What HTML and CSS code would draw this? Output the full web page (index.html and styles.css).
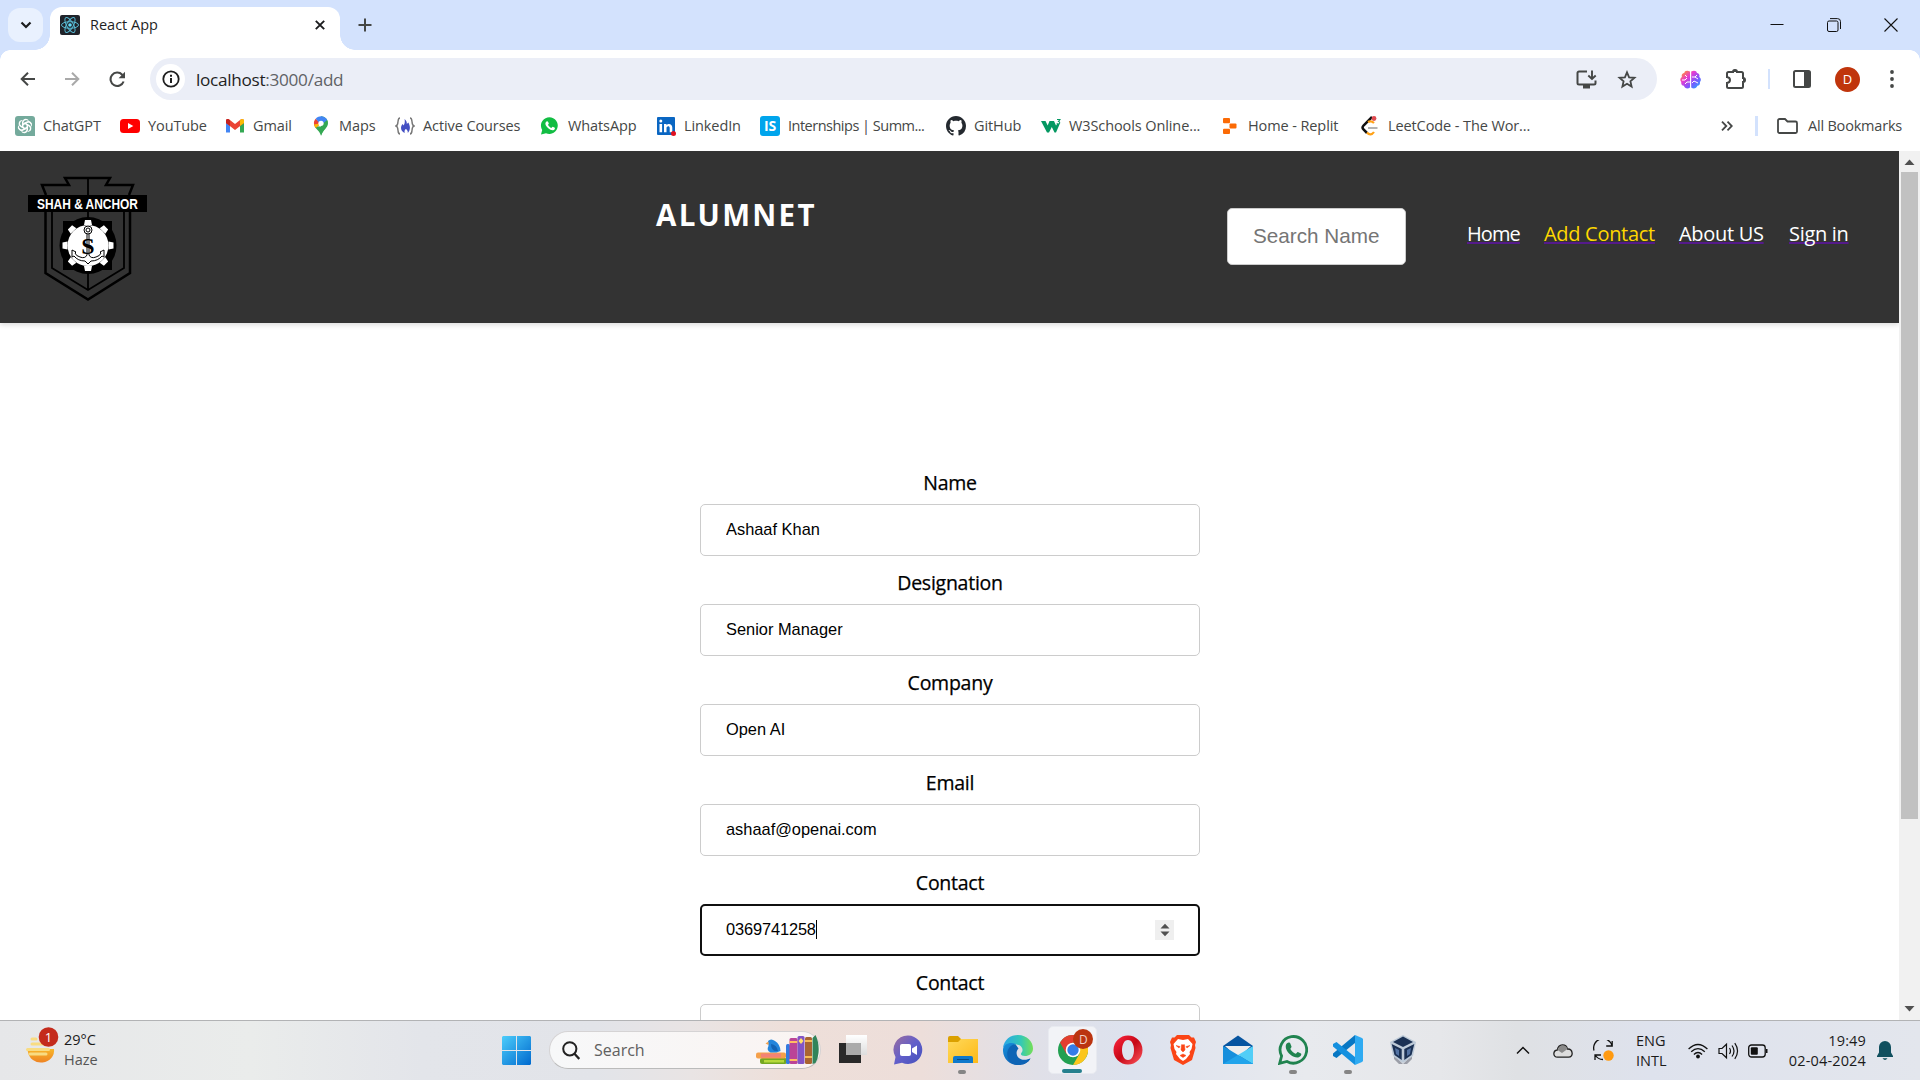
FILE: index.html
```html
<!DOCTYPE html>
<html lang="en">
<head>
<meta charset="utf-8">
<title>React App</title>
<link rel="stylesheet" href="styles.css">
</head>
<body>
<div class="screen">
  <header class="tabstrip">
    <button class="tab-search"><svg width="12" height="8" viewBox="0 0 12 8"><path d="M1.5 1.5 6 6l4.500-4.500" fill="none" stroke="#1b1c1e" stroke-width="2.200"/></svg></button>
    <div class="tab">
      <svg width="20" height="20" viewBox="0 0 20 20"><rect width="20" height="20" rx="2" fill="#20232a"/><g fill="none" stroke="#58b9d3" stroke-width="1"><ellipse cx="10" cy="10" rx="8.500" ry="3.300"/><ellipse cx="10" cy="10" rx="8.500" ry="3.300" transform="rotate(60 10 10)"/><ellipse cx="10" cy="10" rx="8.500" ry="3.300" transform="rotate(120 10 10)"/></g><circle cx="10" cy="10" r="1.800" fill="#61dafb"/></svg>
      <span class="tab-title">React App</span>
      <svg class="tab-close" width="10" height="10" viewBox="0 0 10 10"><path d="m.8.800 8.400 8.400M9.200.800.800 9.200" stroke="#1b1c1e" stroke-width="1.900"/></svg>
    </div>
    <svg class="new-tab" width="14" height="14" viewBox="0 0 14 14"><path d="M7 .5v13M.5 7h13" stroke="#454746" stroke-width="2"/></svg>
    <div class="window-buttons">
      <svg width="14" height="14" viewBox="0 0 14 14"><path d="M.5 6.500h13" stroke="#111"/></svg>
      <svg width="14" height="14" viewBox="0 0 14 14"><g fill="none" stroke="#111"><rect x=".5" y="3" width="10.500" height="10.500" rx="1.500"/><path d="M3 .6h7.500a3 3 0 0 1 3 3V11"/></g></svg>
      <svg width="14" height="14" viewBox="0 0 14 14"><path d="m.5.500 13 13m0-13-13 13" stroke="#111" stroke-width="1.100"/></svg>
    </div>
  </header>

  <div class="toolbar">
    <svg width="15" height="14" viewBox="0 0 15 14"><path d="M15 7H1.500M8 .8 1.700 7 8 13.200" fill="none" stroke="#454746" stroke-width="2"/></svg>
    <svg width="15" height="14" viewBox="0 0 15 14"><path d="M0 7h13.500M7 .8 13.300 7 7 13.200" fill="none" stroke="#a9a9a9" stroke-width="2"/></svg>
    <svg width="17" height="17" viewBox="0 0 17 17"><path d="M14.600 10.500A6.700 6.700 0 1 1 13.200 3.700L15 5.500" fill="none" stroke="#454746" stroke-width="2.100"/><path d="M16 .8v6.400H9.600z" fill="#454746"/></svg>
    <div class="address">
      <span class="site-info"><svg width="18" height="18" viewBox="0 0 18 18"><circle cx="9" cy="9" r="7.700" fill="none" stroke="#1f1f1f" stroke-width="1.800"/><path d="M9 8v5M9 4.700v2" stroke="#1f1f1f" stroke-width="2"/></svg></span>
      <span class="url">localhost<span>:3000/add</span></span>
      <svg class="install" width="21" height="19" viewBox="0 0 21 19"><path d="M11 1.500H3A1.500 1.500 0 0 0 1.500 3v10A1.500 1.500 0 0 0 3 14.500h15a1.500 1.500 0 0 0 1.500-1.500v-2.500" fill="none" stroke="#454746" stroke-width="2"/><path d="M7 15h7v3.500H7z" fill="#454746"/><path d="M16 .5v8M12.300 5.500 16 9l3.700-3.500" fill="none" stroke="#454746" stroke-width="1.900"/></svg>
      <svg width="20" height="19" viewBox="0 0 20 19"><path d="m10 2.300 2.100 5 5.400.500-4.100 3.500 1.200 5.300L10 13.800l-4.600 2.800 1.200-5.300-4.100-3.500 5.400-.500z" fill="none" stroke="#454746" stroke-width="1.800"/></svg>
    </div>
    <svg class="brain" width="21" height="19" viewBox="0 0 21 19"><defs><linearGradient id="brain" x1="0" y1="0" x2="1" y2="1"><stop offset=".1" stop-color="#ff8a3d"/><stop offset=".35" stop-color="#e83bd0"/><stop offset=".65" stop-color="#7d55ff"/><stop offset="1" stop-color="#18b8ff"/></linearGradient></defs><path d="M10 1.500C7 0 4.500.8 4.300 3 2 3.200 1.200 5.500 2 7 0 8-.2 10.500 1.300 12c-.5 2 .7 3.600 2.500 3.800.8 2.600 4 3.500 6.200 1.700zM11.200 1.500C14 0 16.700.8 16.900 3c2.300.2 3.100 2.500 2.300 4 2 1 2.200 3.500.7 5 .5 2-.7 3.600-2.500 3.800-.8 2.600-4 3.500-6.200 1.700z" fill="url(#brain)"/><path d="M2 10h3l2-2M5 5l2 2M5 14l2-2h3M12 7h3l2-2M12 13l2-2 4 2M15 7l3 2" stroke="#fff" fill="none" stroke-width="1"/></svg>
    <svg class="puzzle" width="22" height="22" viewBox="0 0 22 22"><path d="M3.500 4H8a2 2 0 0 1 4 0h4.500A1.500 1.500 0 0 1 18 5.500V10a2 2 0 0 1 0 4v4.500a1.500 1.500 0 0 1-1.500 1.500h-13A1.500 1.500 0 0 1 2 18.500V15c4-.5 4-5.500 0-6V5.500A1.500 1.500 0 0 1 3.500 4z" fill="none" stroke="#454746" stroke-width="2"/><path d="M7.500 4a2.400 2.400 0 0 1 4.800 0zM18 9.500a2.400 2.400 0 0 1 0 4.800z" fill="#454746"/></svg>
    <i class="divider"></i>
    <svg class="panel" width="18" height="18" viewBox="0 0 18 18"><rect x="1" y="1" width="16" height="16" rx="1.500" fill="none" stroke="#454746" stroke-width="2"/><path d="M11 1h6v16h-6z" fill="#454746"/></svg>
    <span class="avatar">D</span>
    <svg class="menu" width="4" height="18" viewBox="0 0 4 18"><g fill="#454746"><circle cx="2" cy="2" r="1.900"/><circle cx="2" cy="9" r="1.900"/><circle cx="2" cy="16" r="1.900"/></g></svg>
  </div>

  <nav class="bookmarks">
    <a><svg width="20" height="20" viewBox="0 0 20 20"><path d="M3 0h14a3 3 0 0 1 3 3v17H3a3 3 0 0 1-3-3V3a3 3 0 0 1 3-3z" fill="#74aa9c"/><g fill="none" stroke="#fff" stroke-width="1.100"><path id="petal" d="M7.500 12V6.400a3.200 3.200 0 0 1 5.900-1.600M7.500 9 12 6.400a3 3 0 0 1 4.300 2"/><use href="#petal" transform="rotate(60 10 10)"/><use href="#petal" transform="rotate(120 10 10)"/><use href="#petal" transform="rotate(180 10 10)"/><use href="#petal" transform="rotate(240 10 10)"/><use href="#petal" transform="rotate(300 10 10)"/></g></svg><span>ChatGPT</span></a>
    <a><svg width="20" height="20" viewBox="0 0 20 20"><rect y="3" width="20" height="14" rx="3.500" fill="#f00"/><path d="m8 7 5.300 3L8 13z" fill="#fff"/></svg><span>YouTube</span></a>
    <a><svg width="20" height="20" viewBox="0 0 20 20"><path d="M1 5v11.500h4V9z" fill="#4285f4"/><path d="M15 9v7.500h4V5z" fill="#34a853"/><path d="M1 7V4.500C1 3 3 2.500 4.300 3.500L10 8l5.700-4.500C17 2.500 19 3 19 4.500V7l-9 7z" fill="#ea4335"/><path d="m15 4.200.7-.7C17 2.500 19 3 19 4.500V7l-4 3z" fill="#fbbc04"/><path d="M1 4.500C1 3 3 2.700 4 3.400L5 4.200V10L1 7z" fill="#c5221f"/></svg><span>Gmail</span></a>
    <a><svg width="20" height="20" viewBox="0 0 20 20"><path d="M10 .3a7 7 0 0 1 7 7c0 4.500-5 6.500-7 12.500z" fill="#34a853"/><path d="M3.500 10.300C5 13.500 8.500 14.500 10 19.800c1-4.500 4-7 5.500-9z" fill="#34a853"/><path d="M3.300 5.300C2.500 7.500 3 9.500 4.800 11.700L10 7.300z" fill="#fbbc04"/><path d="M4.700 2.800 10 7.300l-5.200 4.400C2.500 9 2.200 5.500 4.700 2.800z" fill="#ea4335"/><path d="M3.100 8.500c.3 1.200.9 2.200 1.700 3.200L10 7.300z" fill="#fbbc04"/><path d="M4.700 2.800A7 7 0 0 1 16.200 4L10 9z" fill="#4285f4"/><circle cx="10" cy="7.300" r="2.600" fill="#fff"/></svg><span>Maps</span></a>
    <a><svg width="20" height="20" viewBox="0 0 20 20"><path d="M5 2C1.500 2 4.500 9 1 10c3.500 1 .5 8 4 8M15 2c3.500 0 .5 7 4 8-3.500 1-.5 8-4 8" fill="none" stroke="#777" stroke-width="1.400"/><path d="M9.500 3c2 1.500 2.500 3.500 2.300 5l1.500-1.500c2 3.500 2.500 7-.5 10.500.2-2-.8-3.500-2-4-1.300 1-1.500 2.500-1 4-4-1.500-5-6.500-2-9l.8 1.500C10 7.500 10 5 9.500 3z" fill="#434fc3"/></svg><span>Active Courses</span></a>
    <a><svg width="20" height="20" viewBox="0 0 20 20"><path d="M1 18.500 2.200 14A8.400 8.400 0 1 1 6 17.300z" fill="#12bd43"/><path d="M6.500 5.500c1-.8 1.500-.3 2.300 1.800.1.700-.9 1.200-.7 1.600.8 1.500 1.800 2.300 3.200 3 .5 0 1-1.300 1.500-1.200l2 1c.6.500-.4 2.300-1.700 2.600-2.500.5-7-2.800-7.700-6.200-.1-1.200.4-2 1.100-2.600z" fill="#fff"/></svg><span>WhatsApp</span></a>
    <a><svg width="20" height="20" viewBox="0 0 20 20"><rect x="1" y="1" width="18" height="18" rx="1" fill="#0a66c2"/><path d="M3.500 8h2.600v8.300H3.500zM8 8h2.500v1.200c1.500-2.200 5.800-1.800 5.800 2.400v4.700h-2.600v-4.300c0-2.700-3.200-2.200-3.200 0v4.300H8z" fill="#fff"/><circle cx="4.800" cy="5" r="1.500" fill="#fff"/><circle cx="17.500" cy="17.500" r="2.500" fill="#e01020"/></svg><span>LinkedIn</span></a>
    <a><span class="is-icon">IS</span><span class="tight">Internships | Summ...</span></a>
    <a><svg width="20" height="20" viewBox="0 0 16 16"><path fill="#24292f" d="M8 0C3.580 0 0 3.580 0 8c0 3.540 2.290 6.530 5.470 7.590.4.070.55-.17.55-.38 0-.19-.01-.82-.01-1.490-2.010.37-2.530-.49-2.690-.94-.09-.23-.48-.94-.82-1.130-.28-.15-.68-.52-.01-.53.63-.01 1.080.58 1.230.82.72 1.210 1.870.87 2.330.66.07-.52.28-.87.51-1.070-1.780-.2-3.640-.89-3.640-3.950 0-.87.31-1.590.82-2.150-.08-.2-.36-1.020.08-2.120 0 0 .67-.21 2.200.82.64-.18 1.320-.27 2-.27s1.360.09 2 .27c1.530-1.040 2.200-.82 2.200-.82.44 1.100.16 1.920.08 2.120.51.56.82 1.270.82 2.150 0 3.070-1.870 3.750-3.650 3.950.29.25.54.73.54 1.480 0 1.070-.01 1.930-.01 2.200 0 .21.15.46.55.38A8.010 8.010 0 0 0 16 8c0-4.420-3.580-8-8-8z"/></svg><span>GitHub</span></a>
    <a><svg width="20" height="20" viewBox="0 0 20 20"><path d="M0 5h4.500l2.200 4.500L8.500 5H13l2 4.500L17 7l1.500 1.500L15 16.500h-1.500L10.800 11 8 16.500H6z" fill="#059862"/><path d="M16 3.500h3l-1.500 2c1.800.2 1.500 2.800-.3 2.800-.7 0-1.200-.3-1.400-.8" fill="none" stroke="#059862" stroke-width="1.100"/></svg><span>W3Schools Online...</span></a>
    <a><svg width="20" height="20" viewBox="0 0 20 20"><g fill="#fb6a05"><rect x="3" y="2" width="7" height="5.200" rx="1"/><rect x="9.500" y="7.400" width="7" height="5.200" rx="1"/><rect x="3" y="12.800" width="7" height="5.200" rx="1"/></g></svg><span>Home - Replit</span></a>
    <a><svg width="20" height="20" viewBox="0 0 20 20"><path d="M12 1 3.500 9.500c-1.400 1.500-1.400 2.500 0 4L7 17" fill="none" stroke="#111" stroke-width="2.500"/><path d="M7 16.500c2 2.500 5 2.500 7-.5M8 6c2.500-1.500 4-1 6 1" fill="none" stroke="#ffa116" stroke-width="2.200"/><path d="M8 12h9.500" stroke="#b3b3b3" stroke-width="2"/><circle cx="14" cy="2.500" r="2.400" fill="#df4b50"/></svg><span>LeetCode - The Wor...</span></a>
    <svg class="more" width="12" height="10" viewBox="0 0 12 10"><path d="m1 .7 4.300 4.300L1 9.300M6.500.700 10.800 5 6.500 9.300" fill="none" stroke="#454746" stroke-width="1.800"/></svg>
    <i class="divider"></i>
    <a><svg width="21" height="16" viewBox="0 0 21 16"><path d="M1 13.500v-11A1.500 1.500 0 0 1 2.500 1H8l2.500 2.500h8A1.500 1.500 0 0 1 20 5v8.500a1.500 1.500 0 0 1-1.500 1.500h-16A1.500 1.500 0 0 1 1 13.500z" fill="none" stroke="#454746" stroke-width="1.800"/></svg><span class="all">All Bookmarks</span></a>
  </nav>

  <div class="viewport">
    <main class="page">
      <div class="site-header">
        <svg class="logo" width="120" height="126" viewBox="0 0 120 126">
          <g fill="none" stroke="#000">
            <path d="M17.500 37v61L60 124.500 102 98V37M18 20l-4-10h27l-4-7h45l-4 7h27l-4 10" stroke-width="2.500"/>
            <path d="M24 36v57l36 22 36-22V36" stroke-width="1.800"/><path d="M60 3v112" stroke-width="1.800"/>
          </g>
          <path d="M0 20h119v17H0z"/><path d="M35 46h49v49H35z"/><circle cx="60" cy="70.500" r="28.500"/>
          <text x="59.500" y="34" textLength="101" lengthAdjust="spacingAndGlyphs">SHAH &amp; ANCHOR</text>
          <g fill="#fff"><circle cx="60" cy="70.500" r="20.500"/><g id="teeth"><path d="m56 50 1-5h6l1 5zM56 91l1 5h6l1-5z"/></g><use href="#teeth" transform="rotate(45 60 70.500)"/><use href="#teeth" transform="rotate(90 60 70.500)"/><use href="#teeth" transform="rotate(135 60 70.500)"/></g>
          <g fill="none" stroke="#000"><circle cx="60" cy="55" r="4"/><circle cx="60" cy="55" r="2"/><path d="M59 59v21q-2 4-7 2-4-1-5-4l1-1-4-2v7l2-1q4 5 11 5l3 3 3-3q7 0 11-5l2 1v-7l-4 2 1 1q-1 3-5 4-5 2-7-2V59"/></g>
          <text class="dollar" x="60" y="79">S</text>
        </svg>
        <h1>ALUMNET</h1>
        <input class="site-search" placeholder="Search Name">
        <div class="site-nav"><a class="home">Home</a><a class="active">Add Contact</a><a>About US</a><a>Sign in</a></div>
      </div>
      <form class="form">
        <label>Name</label><input value="Ashaaf Khan">
        <label>Designation</label><input value="Senior Manager">
        <label>Company</label><input value="Open AI">
        <label>Email</label><input value="ashaaf@openai.com">
        <label>Contact</label>
        <div class="field focused"><span>0369741258</span><i class="caret"></i><span class="spin"><svg width="10" height="14" viewBox="0 0 10 14"><path d="M.5 5.500 5 .7l4.500 4.800zM.500 8.500 5 13.300l4.500-4.800z" fill="#505050"/></svg></span></div>
        <label>Contact</label><input>
      </form>
    </main>
    <div class="scrollbar">
      <svg width="21" height="21" viewBox="0 0 21 21"><path d="M5.500 14 10.500 8.500l5 5.500z" fill="#505050"/></svg>
      <div class="thumb"></div>
      <svg width="21" height="23" viewBox="0 0 21 23"><path d="m5.500 9 5 5.500 5-5.500z" fill="#505050"/></svg>
    </div>
  </div>

  <footer class="taskbar">
    <div class="weather">
      <svg width="38" height="38" viewBox="0 0 38 38"><defs><linearGradient id="sun" x2="0" y2="1"><stop stop-color="#f8b72a"/><stop offset="1" stop-color="#ee8323"/></linearGradient></defs><path d="M1 22h27a13 12 0 0 1-26 3z" fill="url(#sun)"/><g stroke="#f8dc82" stroke-width="3" stroke-linecap="round"><path d="M6 12h4M6 17h12M1.500 22.500h21M4 27h16"/></g><circle cx="22.500" cy="10" r="9.800" fill="#c42b1c"/><text x="22.500" y="15">1</text></svg>
      <div class="weather-text"><span>29°C</span><span class="muted">Haze</span></div>
    </div>
    <div class="apps">
      <svg class="start" width="29" height="29" viewBox="0 0 29 29"><defs><linearGradient id="win" x2="1" y2="1"><stop stop-color="#4ccdfb"/><stop offset="1" stop-color="#0069ce"/></linearGradient></defs><path d="M1 0h13v14H0V1zM15 0h13l1 1v13H15zM0 15h14v14H1l-1-1zM15 15h14v13l-1 1H15z" fill="url(#win)"/></svg>
      <div class="searchbox">
        <svg width="18" height="19" viewBox="0 0 18 19"><circle cx="7.800" cy="7.800" r="6.600" fill="none" stroke="#222" stroke-width="2"/><path d="m12.500 12.800 4.800 5.200" stroke="#222" stroke-width="2.300"/></svg>
        <span>Search</span>
        <svg class="books" width="63" height="30" viewBox="0 0 63 30"><rect x="4" y="23" width="27" height="6" rx="2" fill="#74a722"/><path d="M8 25h20v2.500H8z" fill="#b5d93b"/><rect y="17.500" width="30" height="6" rx="2" fill="#f5a04a"/><path d="M5 18.500h20v4H5z" fill="#f38375"/><path d="M12 6q3-3 7 0 5 3 5.500 10l-4 1.500h-6Q10 15 12.500 11z" fill="#2385dc"/><path d="M15 9q6 1 7 7-7 1-7-7z" fill="#1463b4"/><path d="m9.500 8.500 3-2v3.500z" fill="#f5a04a"/><rect x="30" y="9" width="4" height="20" rx="1.500" fill="#347be0"/><rect x="33.500" y="3" width="8" height="26" rx="1.500" fill="#bb4497"/><path d="M33.500 6h8v2h-8zM33.500 24h8v2h-8z" fill="#ffbd63"/><rect x="41.500" y="1" width="7" height="28" rx="1.500" fill="#8254c5"/><path d="m45 3 2.500 3L45 9l-2.500-3z" fill="#ffe16a"/><rect x="49" y="2" width="7" height="27" rx="1.500" fill="#a96431"/><path d="M49 6h7M49 22h7" stroke="#f6bb55" stroke-width="2"/><path d="m56.500 3 3-3q4 8 3 18-.5 6-3 10l-3 1z" fill="#32845a"/></svg>
      </div>
      <div class="app"><svg width="30" height="30" viewBox="0 0 30 30"><defs><linearGradient id="tv" x2="0" y2="1"><stop stop-color="#fff"/><stop offset="1" stop-color="#ddd"/></linearGradient></defs><path d="M1 8h22v20H1z" fill="#292929"/><path d="M8 0h21v20H8z" fill="url(#tv)"/><path d="M8 8h15v12H8z" fill="#aaa"/></svg></div>
      <div class="app"><svg width="30" height="30" viewBox="0 0 30 30"><defs><linearGradient id="chat" x2="1" y2="1"><stop offset=".1" stop-color="#916ba7"/><stop offset=".5" stop-color="#625fca"/><stop offset="1" stop-color="#4450bc"/></linearGradient></defs><path d="M15 .5a14.300 14.300 0 1 1-6 27.300L1 29.500 2.500 22A14.300 14.300 0 0 1 15 .5z" fill="url(#chat)"/><rect x="7" y="9" width="11" height="12" rx="2" fill="#fff"/><path d="m19 13.500 5-3v9.500l-5-3z" fill="#fff"/></svg></div>
      <div class="app running"><svg width="30" height="30" viewBox="0 0 30 30"><defs><linearGradient id="fold" x2="1" y2="1"><stop stop-color="#ffd95b"/><stop offset="1" stop-color="#fdb917"/></linearGradient></defs><path d="M0 3q0-2 2-2h8l3 3v5H0z" fill="#dba000"/><path d="M0 7h10l3-3h17v24H0z" fill="url(#fold)"/><path d="M5 28v-5q0-2 2-2h16q2 0 2 2v5z" fill="#1079cb"/><path d="M9 24.500h12" stroke="#0a4b82"/></svg></div>
      <div class="app"><svg width="30" height="30" viewBox="0 0 30 30"><defs><linearGradient id="edge" x1="0" x2="1"><stop stop-color="#2aa5e8"/><stop offset=".6" stop-color="#34c9b5"/><stop offset="1" stop-color="#75df55"/></linearGradient><linearGradient id="edge2" x2="1" y2="1"><stop stop-color="#1792de"/><stop offset="1" stop-color="#0c4b9f"/></linearGradient></defs><path d="M0 13C1 4.500 7.500 0 15 0c9 0 15 6.500 15 13.500 0 5-4 7.500-8 7.500-3.500 0-5-1.500-3.500-3.200 2.500-3 .5-8.300-6-8.300C6.500 9.500 1 11 0 13z" fill="url(#edge)"/><path d="M0 14c1-5 7-7.500 12.500-5C6 11 7 26 20 25.500c3 0 5-.8 7.500-2C25 28 20 30 15 30 6 30-.5 23 0 14z" fill="url(#edge2)"/><path d="M12.500 9.300C4 10 1 22 8.500 28c2 1.500 5 2 6.500 2 5 0 10-2 12.500-6.500-12 5-17-5-12-10z" fill="#0e64b5"/></svg></div>
      <div class="app current"><svg width="30" height="30" viewBox="0 0 30 30"><circle cx="15" cy="15" r="15" fill="#23a052"/><path d="M2 7.500A15 15 0 0 1 28 7.500H15L8.500 19z" fill="#e33e2f"/><path d="M28 7.500A15 15 0 0 1 15 30l6.500-11.200L22 7.500z" fill="#fbc61d"/><circle cx="15" cy="15" r="7.300" fill="#fff"/><circle cx="15" cy="15" r="5.700" fill="#347ce8"/></svg><span class="app-badge">D</span></div>
      <div class="app"><svg width="30" height="30" viewBox="0 0 30 30"><defs><linearGradient id="op" x2="1" y2="1"><stop stop-color="#ff2841"/><stop offset=".5" stop-color="#c60716"/><stop offset="1" stop-color="#ff5a60"/></linearGradient></defs><path fill-rule="evenodd" d="M15 .5a14.500 14.500 0 1 1 0 29 14.500 14.500 0 0 1 0-29zm0 4.500c-8 0-8 20 0 20s8-20 0-20z" fill="url(#op)"/></svg></div>
      <div class="app"><svg width="26" height="30" viewBox="0 0 26 30"><path d="M7 0h12l2.500 2.500L24 2.500l2 4.500-1 3 .5 3-3.500 12-9 5-9-5L.5 13 1 10 0 7l2-4.500h2.500z" fill="#fb4516"/><path d="m8 4 5 1 5-1 4.500 5-1 5-2 3 .5 2-4 5-3 2-3-2-4-5 .5-2-2-3-1-5z" fill="#fff"/><path d="m6 10.500 4 1-1 1.500zM20 10.500l-4 1 1 1.500zM11.500 9.500 11 15l2 2 2-2-.5-5.500M10 20.500l3-1.500 3 1.500-3 2z" fill="#fb4516" stroke="#fb4516" stroke-width=".5"/></svg></div>
      <div class="app"><svg width="30" height="30" viewBox="0 0 30 30"><path d="M0 11 15 .5 30 11v18H0z" fill="#0755a0"/><path d="M2 11h26l-13 12z" fill="#eee"/><path d="M0 11v18h30z" fill="#178fdc"/><path d="M30 11v18L15 20z" fill="#52cef7"/><path d="M0 29h30L15 20z" fill="#21a4eb"/></svg></div>
      <div class="app running"><svg width="30" height="30" viewBox="0 0 30 30"><path d="M1.700 28.300 3.600 21A13.300 13.300 0 1 1 9 26.500z" fill="none" stroke="#20834f" stroke-width="2.800"/><path d="M8.700 8.500C10.500 7 12 7 12.500 9l1 2.500c.3.800-1.500 2-1 2.700 1.300 2.300 3 3.800 5 4.500.8.200 1.600-2 2.400-1.800l3.100 1.600c1 1-.5 3.500-3 4C15.500 23 9.500 18.500 8 13.500c-.5-2-.3-4 .7-5z" fill="#20834f"/></svg></div>
      <div class="app running"><svg width="30" height="30" viewBox="0 0 30 30"><path d="M22 0v8L3.500 23 0 21v-2.500z" fill="#0877c3"/><path d="M22 30v-8L3.500 7 0 9v2.500z" fill="#1490df"/><path d="m22 0 7 3 1 1v22l-1 1-7 3z" fill="#2fabf2"/></svg></div>
      <div class="app"><svg width="26" height="30" viewBox="0 0 26 30"><path d="m4 20 9 9 9-9v4l-5 5h-8l-5-5z" fill="#9b9ea8"/><path d="M13 0 26 7l-3 14-10 7L3 21 0 7z" fill="#bdcad8"/><path d="m13 1.500 10 5.500-10 5L3 7zM1.700 9l10 5v11L4.500 20zM24.300 9l-10 5v11l7.200-5z" fill="#1b3154"/><path d="m5 13 4 2v6l-3-2zM21 13l-4 2v6l3-2z" fill="#5272a3"/></svg></div>
    </div>
    <div class="tray">
      <svg width="14" height="9" viewBox="0 0 14 9"><path d="m1 7.500 6-6 6 6" fill="none" stroke="#111" stroke-width="1.500"/></svg>
      <svg class="cloud" width="20" height="14" viewBox="0 0 20 14"><path d="M4.500 13.200C-.5 13.200-.2 6.500 4.300 6 5.500-.5 13-.5 14.500 5c5.500-.3 6.500 8.200 1 8.200z" fill="#ddd" stroke="#222" stroke-width="1.300"/><path d="M4.500 6C6-.2 13-.2 14.500 5L9 9z" fill="#8a8a8a"/></svg>
      <svg class="sync" width="21" height="21" viewBox="0 0 21 21"><path d="M1 10.500A9 9 0 0 1 19 5.500M19.200 1v5h-6M8 15H2v5M2 15q3 4.500 8 4.500" fill="none" stroke="#111" stroke-width="1.300"/><circle cx="15.500" cy="15.500" r="5.200" fill="#ff9a10"/></svg>
      <div class="lang"><span>ENG</span><span>INTL</span></div>
      <svg class="wifi" width="20" height="16" viewBox="0 0 20 16"><g fill="none" stroke="#111" stroke-width="1.300"><path d="M.6 6Q10-3 19.400 6M3.200 8.800q6.800-6.300 13.600 0M5.900 11.400q4.100-3.700 8.200 0"/></g><circle cx="10" cy="13.500" r="1.900" fill="#111"/></svg>
      <svg class="vol" width="21" height="18" viewBox="0 0 21 18"><path d="M1 6.500h3l4.500-4.300v13.600L4 11.500H1zM11.500 6q2 3 0 6M14 3.500q4 5.500 0 11M16.800 1.200q5.500 7.800 0 15.600" fill="none" stroke="#111" stroke-width="1.200"/></svg>
      <svg class="batt" width="20" height="14" viewBox="0 0 20 14"><rect x=".7" y="1" width="16.500" height="12" rx="2.800" fill="none" stroke="#111" stroke-width="1.300"/><rect x="2.800" y="3.200" width="7" height="7.600" rx="1" fill="#111"/><path d="M18 5h1.500v4H18z" fill="#111"/></svg>
      <div class="clock"><span>19:49</span><span>02-04-2024</span></div>
      <svg class="bell" width="16" height="20" viewBox="0 0 16 20"><path d="M8 0a6 6 0 0 1 6 6v5.500l2 3.500v1H0v-1l2-3.500V6a6 6 0 0 1 6-6zM5.500 17.200h5q-2.500 3.500-5 0z" fill="#11505f"/></svg>
    </div>
  </footer>
</div>
</body>
</html>
```
FILE: styles.css
```css
* { box-sizing: border-box; }
body { margin: 0; overflow: hidden; font-family: "Open Sans", "Noto Sans", sans-serif; background: #fff; }
svg { display: block; flex: none; }
.screen { width: 1920px; height: 1080px; display: flex; flex-direction: column; background: #fff; }

.tabstrip { height: 50px; flex: none; display: flex; align-items: center; background: #d3e2fd; padding-left: 8px; }
.tab-search { width: 35px; height: 34px; border: 0; border-radius: 12px; background: #e9f1fe; display: grid; place-items: center; padding: 0; }
.tab { position: relative; align-self: flex-end; width: 290px; height: 43px; margin-left: 7px; padding: 0 15px 7px 10px; background: #fff; border-radius: 12px 12px 0 0; display: flex; align-items: center; gap: 10px; }
.tab::before, .tab::after { content: ""; position: absolute; bottom: 0; width: 15px; height: 15px; }
.tab::before { left: -15px; background: radial-gradient(circle at 0 0, transparent 14.500px, #fff 15px); }
.tab::after { right: -15px; background: radial-gradient(circle at 100% 0, transparent 14.500px, #fff 15px); }
.tab-title { font-size: 14.500px; color: #1f1f1f; padding-bottom: 2px; }
.tab-close { margin-left: auto; }
.new-tab { margin-left: 18px; }
.window-buttons { margin-left: auto; display: flex; gap: 43px; padding-right: 22px; }

.toolbar { height: 50px; flex: none; display: flex; align-items: center; padding: 8px 0 0 20px; position: relative; background: #fff; }
.toolbar::before, .toolbar::after { content: ""; position: absolute; top: 0; width: 10px; height: 10px; }
.toolbar::before { left: 0; background: radial-gradient(circle at 100% 100%, transparent 9.500px, #d3e2fd 10px); }
.toolbar::after { right: 0; background: radial-gradient(circle at 0 100%, transparent 9.500px, #d3e2fd 10px); }
.toolbar > svg:nth-child(2) { margin-left: 30px; }
.toolbar > svg:nth-child(3) { margin-left: 29px; }
.address { width: 1507px; height: 42px; margin-left: 24px; border-radius: 21px; background: #ebeef7; display: flex; align-items: center; padding: 0 20px 0 6px; }
.site-info { width: 29px; height: 30px; border-radius: 50%; background: #fff; display: grid; place-items: center; }
.url { margin-left: 11px; font-size: 17.200px; letter-spacing: -.300px; color: #1f1f1f; }
.url span { color: #5f6266; }
.install { margin-left: auto; margin-right: 20px; }
.brain { margin-left: 23px; }
.puzzle { margin-left: 24px; }
.divider { width: 2px; height: 20px; background: #d3e2fd; flex: none; }
.toolbar .divider { margin-left: 21px; }
.panel { margin-left: 23px; }
.avatar { width: 25px; height: 25px; border-radius: 50%; margin-left: 24px; background: #c0350c; color: #fff; font-size: 13px; display: grid; place-items: center; }
.menu { margin-left: 30px; }

.bookmarks { height: 51px; flex: none; display: grid; grid-template-columns: 105px 105px 86px 84px 145px 116px 104px 186px 95px 179px 140px 361px 34px 22px auto; align-items: center; padding-left: 15px; font-size: 14.500px; letter-spacing: -.100px; color: #454746; white-space: nowrap; }
.bookmarks a { display: flex; align-items: center; gap: 8px; }
.bookmarks .tight { letter-spacing: -.500px; }
.bookmarks .all { margin-left: 2px; letter-spacing: -.200px; }
.is-icon { width: 20px; height: 20px; border-radius: 3px; background: #00a5ec; color: #fff; font-weight: 700; font-size: 14px; display: grid; place-items: center; line-height: 20px; }
.bookmarks .divider { width: 3px; }

.viewport { flex: 1; min-height: 0; display: flex; overflow: hidden; }
.page { width: 1899px; overflow: hidden; }
.site-header { height: 172px; background: #333; box-shadow: 0 2px 5px rgba(0,0,0,.14); display: flex; align-items: flex-start; }
.logo { margin: 24px 0 0 28px; overflow: visible; }
.logo text { font: 700 15px "Liberation Sans", sans-serif; fill: #fff; text-anchor: middle; }
.logo .dollar { font: 700 24px "Liberation Serif", serif; fill: #000; }
h1 { margin: 43px 0 0 508px; width: 571px; font-size: 29.500px; line-height: 42px; letter-spacing: 2.300px; color: #fff; }
.site-search { width: 179px; height: 57px; margin-top: 57px; padding: 0 25px 2px; border: 1px solid #ccc; border-radius: 5px; font: 20.700px "Liberation Sans", sans-serif; }
.site-search::placeholder { color: #757575; }
.site-nav { display: grid; grid-template-columns: 77px 135px 110px 70px; margin: 68px 0 0 61px; font-size: 20px; line-height: 30px; letter-spacing: -.300px; color: #fff; white-space: nowrap; }
.site-nav a { justify-self: start; text-decoration: underline #551a8b 2px; text-underline-offset: 1px; text-decoration-skip-ink: none; }
.site-nav .home { letter-spacing: -.900px; }
.site-nav .active { color: gold; }

.form { width: 500px; margin: 133px auto 0 700px; display: flex; flex-direction: column; }
.form label { height: 48px; line-height: 53px; text-align: center; font-size: 19.500px; letter-spacing: -.250px; font-weight: 500; color: #000; -webkit-text-stroke: .250px #000; }
.form input, .field { width: 500px; height: 52px; flex: none; padding: 0 25px 2px; border: 1px solid #ccc; border-radius: 5px; font: 16.400px "Liberation Sans", sans-serif; color: #000; background: #fff; }
.field { display: flex; align-items: center; }
.form .focused { border: 2px solid #101010; padding: 0 24px 1px; letter-spacing: -.130px; }
.focused > span:first-child { padding-bottom: 1px; }
.caret { width: 1px; height: 19px; background: #000; }
.spin { margin-left: auto; width: 19px; height: 20px; background: #efefef; display: grid; place-items: center; }

.scrollbar { width: 21px; background: #f1f1f1; display: flex; flex-direction: column; align-items: center; }
.thumb { width: 17px; height: 647px; margin-bottom: auto; background: #c1c1c1; }

.taskbar { height: 60px; flex: none; border-top: 1px solid #b2b3b5; display: flex; background: linear-gradient(90deg, #e6e7e9 0, #eaeceb 13%, #e3e5ea 22%, #e2e4e9 31%, #e9e4e4 36%, #eedfd9 41%, #eddeda 48%, #e0e0e8 54%, #dde2ee 59%, #e8eaee 68%, #e6e7ea 75%, #dfe1e4 79%, #dee2ed 86%, #e3e6ed 100%); color: #1b1b1b; font-size: 14.500px; }
.weather { width: 502px; padding: 6px 0 0 26px; display: flex; }
.weather text { font-size: 13px; fill: #fff; text-anchor: middle; }
.weather-text, .lang, .clock { display: flex; flex-direction: column; line-height: 20px; }
.weather-text { padding-top: 3px; }
.muted { color: #555; }
.apps { display: flex; align-items: center; padding-bottom: 1px; }
.start { margin-right: 18px; }
.searchbox { width: 272px; height: 38px; margin-right: 7px; border: 1px solid #d5d3d4; border-bottom-color: #bbb; border-radius: 19px; background: linear-gradient(90deg, #f7f8f9, #faf4f2); display: flex; align-items: center; padding: 0 1px 0 12px; font-size: 16px; color: #606060; }
.searchbox span { margin-left: 14px; }
.books { margin-left: auto; }
.app { position: relative; width: 49px; height: 48px; margin-right: 6.100px; display: grid; place-items: center; }
.current { background: #f2f3f7; border-radius: 5px; border: 1px solid #e8eaf0; }
.running::after, .current::after { content: ""; position: absolute; bottom: 0; left: 20px; width: 8px; height: 4px; border-radius: 2px; background: #858585; }
.current::after { left: 13px; width: 20px; background: #26808e; }
.app-badge { position: absolute; right: 3px; top: 2px; width: 20px; height: 20px; border-radius: 50%; background: #bb3410; color: #f0d0c4; font-size: 12px; display: grid; place-items: center; }
.tray { flex: 1; display: flex; align-items: center; justify-content: flex-end; padding-right: 27px; white-space: nowrap; }
.cloud { margin-left: 23px; }
.sync { margin-left: 20px; }
.lang { margin-left: 22px; width: 52px; }
.vol { margin-left: 10px; }
.batt { margin-left: 9px; }
.clock { width: 98px; text-align: right; letter-spacing: .150px; }
.bell { margin-left: 11px; }
```
